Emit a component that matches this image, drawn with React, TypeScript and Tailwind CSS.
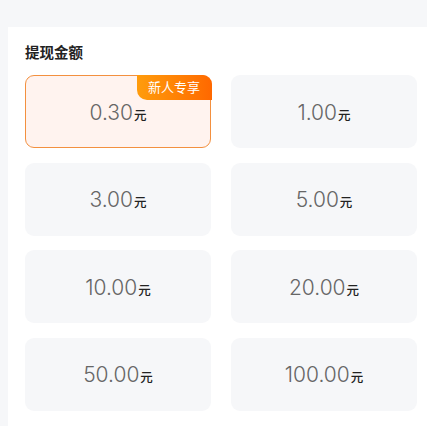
const amounts = ['0.30', '1.00', '3.00', '5.00', '10.00', '20.00', '50.00', '100.00'];

function AmountCard({ value, selected }: { value: string; selected?: boolean }) {
  return (
    <div
      className={`relative h-[73px] rounded-[9px] flex items-center justify-center ${
        selected ? 'bg-[#fff3ef] border-[1.5px] border-[#f3903f]' : 'bg-[#f6f7f9]'
      }`}
    >
      {selected && (
        <div className="absolute -top-[1.5px] -right-[1.5px] h-[25px] w-[75px] rounded-tr-[9px] rounded-bl-[10px] bg-gradient-to-r from-[#ff9c0c] to-[#ff6800] flex items-center justify-center text-[13px] text-white">
          新人专享
        </div>
      )}
      <div className="flex items-baseline pt-[2px]">
        <span className="text-[21px] font-light text-[#666666]" style={{ fontFamily: 'Inter, "Noto Sans", sans-serif' }}>
          {value}
        </span>
        <span className="text-[12.5px] font-medium text-[#222222] ml-[1px]">元</span>
      </div>
    </div>
  );
}

export default function App() {
  return (
    <div
      className="min-h-[426px] bg-[#f6f7f9] pt-[27px] pl-[8px]"
      style={{ fontFamily: '"Noto Sans CJK SC", sans-serif' }}
    >
      <div className="bg-white min-h-[399px] pl-[17px] pt-[13px] pb-[16px]">
        <h2 className="text-[14.5px] font-bold text-[#222222] leading-[24px]">提现金额</h2>
        <div className="mt-[11px] grid grid-cols-[186px_186px] gap-x-[20px] gap-y-[14.5px]">
          {amounts.map((a, i) => (
            <AmountCard key={a} value={a} selected={i === 0} />
          ))}
        </div>
      </div>
    </div>
  );
}
